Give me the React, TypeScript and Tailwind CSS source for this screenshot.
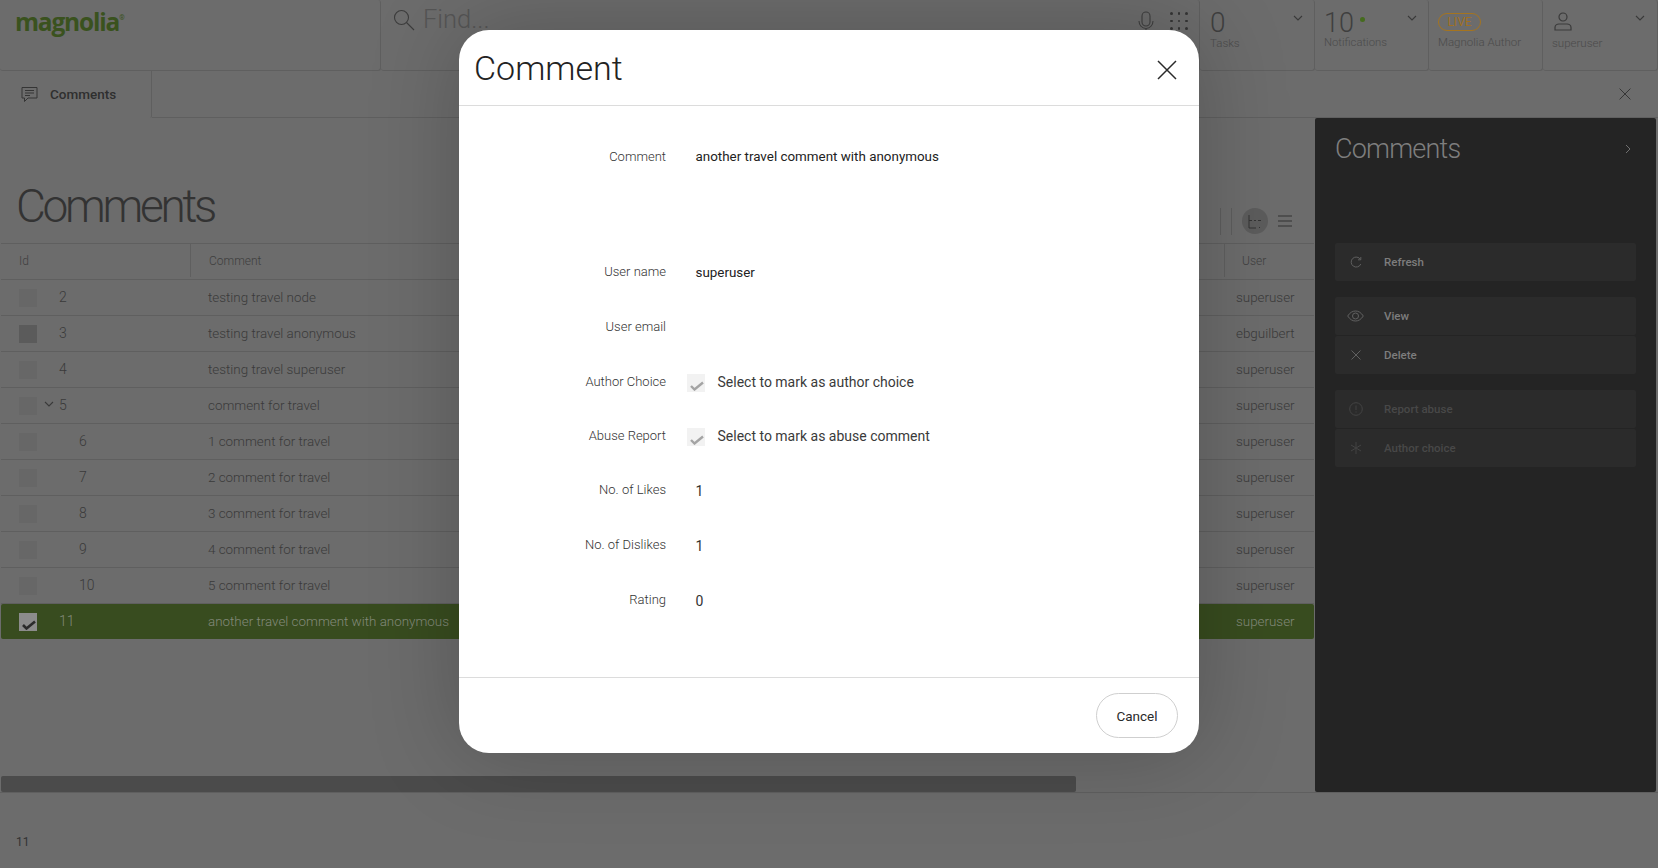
import React from "react";

const font = { fontFamily: "Roboto, sans-serif" };

const rows = [
  { id: "2", indent: false, text: "testing travel node", user: "superuser" },
  { id: "3", indent: false, text: "testing travel anonymous", user: "ebguilbert", dark: true },
  { id: "4", indent: false, text: "testing travel superuser", user: "superuser" },
  { id: "5", indent: false, text: "comment for travel", user: "superuser", open: true },
  { id: "6", indent: true, text: "1 comment for travel", user: "superuser" },
  { id: "7", indent: true, text: "2 comment for travel", user: "superuser" },
  { id: "8", indent: true, text: "3 comment for travel", user: "superuser" },
  { id: "9", indent: true, text: "4 comment for travel", user: "superuser" },
  { id: "10", indent: true, text: "5 comment for travel", user: "superuser" },
];

function Chevron({ className = "" }: { className?: string }) {
  return (
    <svg width="10" height="6" viewBox="0 0 10 6" className={className} fill="none" stroke="#3a3a3a" strokeWidth="1.1">
      <path d="M1 1l4 4 4-4" />
    </svg>
  );
}

function Cross({ size, color, width = 1 }: { size: number; color: string; width?: number }) {
  return (
    <svg width={size} height={size} viewBox="0 0 20 20" fill="none" stroke={color} strokeWidth={width}>
      <path d="M1 1l18 18M19 1L1 19" />
    </svg>
  );
}

function Check({ color, width = 2 }: { color: string; width?: number }) {
  return (
    <svg width="14" height="11" viewBox="0 0 14 11" fill="none" stroke={color} strokeWidth={width} className="absolute left-[3px] top-[6px]">
      <path d="M1 6l3.500 3.500L13 2.500" />
    </svg>
  );
}

function StatusCell({ className, children }: { className: string; children: React.ReactNode }) {
  return <div className={`relative h-[71px] rounded-[3px] border-b border-r border-[#5f5f5f] ${className}`}>{children}</div>;
}

function ActionButton({ icon, label, dim, className = "" }: { icon: React.ReactNode; label: string; dim?: boolean; className?: string }) {
  return (
    <div className={`flex h-[38px] items-center rounded-[2px] bg-[#2b2b2b] ${className}`}>
      <div className="flex w-[41px] justify-center">{icon}</div>
      <span className={`ml-[8px] pt-[2px] text-[11.500px] font-medium ${dim ? "text-[#484848]" : "text-[#7d7d7d]"}`}>{label}</span>
    </div>
  );
}

function FormRow({ label, flush, className = "", children }: { label: string; flush?: boolean; className?: string; children?: React.ReactNode }) {
  return (
    <div className={`flex items-center ${className}`}>
      <div className={`w-[207px] text-right text-[13px] font-light text-[#333] ${flush ? "mt-[1px]" : "mb-[1px]"}`}>{label}</div>
      <div className="flex items-center pl-[29.500px] text-[13.400px] text-[#222]">{children}</div>
    </div>
  );
}

function Value({ children, digit }: { children: React.ReactNode; digit?: boolean }) {
  return <span className={`pt-[2px] ${digit ? "text-[14px] text-[#333]" : ""}`}>{children}</span>;
}

function DisabledCheck({ label }: { label: string }) {
  return (
    <div className="flex items-center">
      <div className="relative mt-[2px] h-[18px] w-[18px] bg-[#f2f2f2]">
        <Check color="#a4a4a4" width={2.4} />
      </div>
      <span className="ml-[13px] text-[14px] text-[#3a3a3a]">{label}</span>
    </div>
  );
}

export default function App() {
  return (
    <div style={font} className="relative flex h-[868px] w-[1658px] flex-col overflow-hidden bg-[#6c6c6c] text-[#3a3a3a]">
      <header className="flex h-[71px] shrink-0">
        <StatusCell className="w-[381px]">
          <div className="ml-[15px] mt-[2px] flex items-start">
            <span style={{ fontFamily: '"Open Sans", sans-serif' }} className="text-[24.500px] font-bold leading-[40px] tracking-[-1.200px] text-[#3a521e]">
              magnolia
            </span>
            <span className="mt-[11px] text-[7px] leading-[10px] text-[#3a521e]">®</span>
          </div>
        </StatusCell>
        <StatusCell className="flex w-[819px] items-start">
          <svg width="22" height="22" viewBox="0 0 22 22" fill="none" stroke="#3c3c3c" strokeWidth="1.1" className="ml-[12px] mt-[9px]">
            <circle cx="8.500" cy="8.500" r="7" />
            <path d="M13.500 13.500l7.500 7.500" />
          </svg>
          <span className="ml-[8px] mt-[2px] text-[25.500px] font-light leading-[34px] text-[#555]">Find...</span>
          <svg width="16" height="24" viewBox="0 0 16 24" fill="none" stroke="#3f3f3f" strokeWidth="1.1" className="absolute left-[757px] top-[11px]">
            <rect x="4" y="1" width="8" height="14" rx="4" />
            <path d="M1 10c0 4 3 7.500 7 7.500s7-3.500 7-7.500M8 17.500V23" />
          </svg>
          <div className="absolute left-[789px] top-[12px] grid grid-cols-3 gap-[5px]">
            {Array.from({ length: 9 }).map((_, i) => (
              <div key={i} className="h-[2.500px] w-[2.500px] rounded-full bg-[#353535]" />
            ))}
          </div>
        </StatusCell>
        <StatusCell className="w-[115px] pl-[10px]">
          <div className="mt-[8px] text-[28px] font-light leading-[30px] text-[#3f3f3f]">0</div>
          <div className="mt-[-3px] text-[11.500px] font-light text-[#4b4b4b]">Tasks</div>
          <Chevron className="absolute left-[93px] top-[15px]" />
        </StatusCell>
        <StatusCell className="w-[114px] pl-[9px]">
          <div className="mt-[8px] flex items-start">
            <span className="text-[27px] font-light leading-[30px] text-[#3f3f3f]">10</span>
            <span className="ml-[6px] mt-[9px] h-[5px] w-[5px] rounded-full bg-[#456b1e]" />
          </div>
          <div className="mt-[-3px] text-[11.300px] font-light text-[#4b4b4b]">Notifications</div>
          <Chevron className="absolute left-[92px] top-[15px]" />
        </StatusCell>
        <StatusCell className="w-[114px] pl-[9px]">
          <div className="mt-[13px] flex h-[18px] w-[43px] items-center justify-center rounded-full border border-[#a5741f] text-[12px] text-[#a0701f]">LIVE</div>
          <div className="mt-[3px] text-[11.500px] font-light text-[#4b4b4b]">Magnolia Author</div>
        </StatusCell>
        <StatusCell className="w-[115px] pl-[9px]">
          <svg width="18" height="19" viewBox="0 0 18 19" fill="none" stroke="#3a3a3a" strokeWidth="1.2" className="absolute left-[11px] top-[12px]">
            <circle cx="9" cy="5" r="4" />
            <path d="M1 18v-2.500c0-2 2-3.500 4-3.500h8c2 0 4 1.500 4 3.500V18z" />
          </svg>
          <div className="mt-[35px] text-[11.500px] font-light text-[#4b4b4b]">superuser</div>
          <Chevron className="absolute left-[92px] top-[15px]" />
        </StatusCell>
      </header>

      <div className="flex h-[47px] shrink-0 items-stretch">
        <div className="flex w-[152px] items-center rounded-br-[2px] border-r border-[#5f5f5f] pl-[21px]">
          <svg width="17" height="17" viewBox="0 0 17 17" fill="none" stroke="#353535" strokeWidth="1">
            <path d="M1 1.500h15v10.500H7l-3.500 3.500V12H1zM4 4.500h9M4 7h9M4 9.500h5" />
          </svg>
          <span className="ml-[12px] text-[13.500px] font-medium text-[#2f2f2f]">Comments</span>
        </div>
        <div className="flex flex-1 items-center justify-end border-b border-[#5f5f5f] pr-[27px]">
          <Cross size={12} color="#333" width={1.6} />
        </div>
      </div>

      <main className="flex h-[674px] shrink-0">
        <section className="flex w-[1315px] flex-col pl-[1px] pr-[1px]">
          <div className="relative h-[125px] shrink-0">
            <h1 className="absolute left-[15px] top-[59px] text-[46px] font-light leading-[58px] tracking-[-3.300px] text-[#333]">Comments</h1>
            <div className="absolute left-[1219px] top-[90px] h-[27px] w-[12px] border-x border-[#5d5d5d]" />
            <div className="absolute left-[1241px] top-[90px] flex h-[26px] w-[26px] items-center justify-center rounded-full bg-[#5c5c5c]">
              <svg width="14" height="15" viewBox="0 0 14 15" fill="none" stroke="#333" strokeWidth="1">
                <path d="M1 1v13h7M1 6.500h3M6 6.500h2M10 6.500h3M11 13.500h1" />
              </svg>
            </div>
            <svg width="14" height="12" viewBox="0 0 14 12" fill="none" stroke="#333" strokeWidth="1.1" className="absolute left-[1277px] top-[97px]">
              <path d="M0 1h14M0 6h14M0 11h14" />
            </svg>
          </div>

          <div className="flex h-[37px] shrink-0 border-y border-[#5f5f5f] pb-[2px] text-[12px] font-light text-[#3f3f3f]">
            <div className="flex w-[190px] items-center border-r border-[#5f5f5f] pl-[18px]">Id</div>
            <div className="flex w-[1034px] items-center border-r border-[#5f5f5f] pl-[18px]">Comment</div>
            <div className="flex flex-1 items-center pl-[17px]">User</div>
          </div>

          {rows.map((row) => (
            <div key={row.id} className="flex h-[36px] shrink-0 items-center border-b border-[#5f5f5f] text-[13.400px] font-light text-[#3a3a3a]">
              <div className="relative flex w-[190px] items-center pl-[18px]">
                <div className={`h-[18px] w-[18px] ${row.dark ? "bg-[#5b5b5b]" : "bg-[#676767]"}`} />
                {row.open && <Chevron className="absolute left-[43px] top-[6px]" />}
                <span className={`text-[14px] ${row.indent ? "ml-[42px]" : "ml-[22px]"}`}>{row.id}</span>
              </div>
              <div className="w-[1034px] pl-[17px] pt-[1px]">{row.text}</div>
              <div className="pl-[11px] pt-[1px]">{row.user}</div>
            </div>
          ))}

          <div className="flex h-[35px] shrink-0 items-center rounded-[2px] bg-[#384c1f] text-[13.400px] font-light text-[#838a7a]">
            <div className="flex w-[190px] items-center pl-[18px]">
              <div className="relative h-[18px] w-[18px] bg-[#8c8c8c]">
                <Check color="#2b2b2b" width={2.6} />
              </div>
              <span className="ml-[22px] text-[14px]">11</span>
            </div>
            <div className="w-[1034px] pl-[17px] pt-[1px]">another travel comment with anonymous</div>
            <div className="pl-[11px] pt-[1px]">superuser</div>
          </div>

          <div className="flex-1" />
          <div className="h-[16px] w-[1075px] shrink-0 rounded-[2px] bg-[#4b4b4b]" />
        </section>

        <aside className="flex w-[341px] flex-col rounded-[2px] bg-[#242424] px-[20px]">
          <div className="flex h-[62px] items-center justify-between pr-[5px]">
            <span className="text-[27px] font-light leading-[40px] tracking-[-0.800px] text-[#7e7e7e]">Comments</span>
            <svg width="6" height="10" viewBox="0 0 6 10" fill="none" stroke="#707070" strokeWidth="1">
              <path d="M1 1l4 4-4 4" />
            </svg>
          </div>
          <ActionButton
            className="mt-[63px]"
            label="Refresh"
            icon={
              <svg width="12" height="12" viewBox="0 0 12 12" fill="none" stroke="#5f5f5f" strokeWidth="1">
                <path d="M10.500 3.500A5 5 0 1 0 10.800 8M10.800 1v2.800H8" />
              </svg>
            }
          />
          <ActionButton
            className="mt-[16px]"
            label="View"
            icon={
              <svg width="17" height="12" viewBox="0 0 17 12" fill="none" stroke="#616161" strokeWidth="1">
                <path d="M.7 6C3 2.500 5.500 1 8.500 1s5.500 1.500 7.800 5c-2.300 3.500-4.800 5-7.800 5S3 9.500.7 6z" />
                <circle cx="8.500" cy="6" r="3" />
              </svg>
            }
          />
          <ActionButton className="mt-px" label="Delete" icon={<Cross size={10} color="#666" width={1.8} />} />
          <ActionButton
            dim
            className="mt-[16px]"
            label="Report abuse"
            icon={
              <svg width="14" height="14" viewBox="0 0 14 14" fill="none" stroke="#434343" strokeWidth="1">
                <circle cx="7" cy="7" r="6.300" />
                <path d="M7 3.500v4.500M7 9.500v1" />
              </svg>
            }
          />
          <ActionButton
            dim
            className="mt-px"
            label="Author choice"
            icon={
              <svg width="12" height="12" viewBox="0 0 12 12" fill="none" stroke="#434343" strokeWidth="1">
                <path d="M6 0v12M1 3l10 6M11 3L1 9" />
              </svg>
            }
          />
        </aside>
      </main>

      <footer className="flex flex-1 items-end border-t border-[#5f5f5f] pb-[17px] pl-[16px] text-[12px] text-[#333]">11</footer>

      <div className="absolute left-[459px] top-[30px] flex h-[723px] w-[740px] flex-col rounded-[30px] bg-white shadow-[0_0_90px_rgba(0,0,0,0.22)]">
        <div className="flex h-[76px] shrink-0 items-center justify-between border-b border-[#dcdcdc] pl-[15px] pr-[22px]">
          <h2 className="text-[34px] font-light leading-[44px] text-[#222]">Comment</h2>
          <div className="mt-[4px]">
            <Cross size={20} color="#2a2a2a" width={1.5} />
          </div>
        </div>
        <div className="flex flex-1 flex-col pt-[40px]">
          <FormRow flush label="Comment" className="h-[20px]"><Value>another travel comment with anonymous</Value></FormRow>
          <FormRow label="User name" className="mt-[96px] h-[20px]"><Value>superuser</Value></FormRow>
          <FormRow label="User email" className="mt-[35px] h-[20px]" />
          <FormRow label="Author Choice" className="mt-[35px] h-[20px]">
            <div className="ml-[-9px]"><DisabledCheck label="Select to mark as author choice" /></div>
          </FormRow>
          <FormRow label="Abuse Report" className="mt-[34px] h-[20px]">
            <div className="ml-[-9px]"><DisabledCheck label="Select to mark as abuse comment" /></div>
          </FormRow>
          <FormRow label="No. of Likes" className="mt-[34px] h-[20px]"><Value digit>1</Value></FormRow>
          <FormRow label="No. of Dislikes" className="mt-[35px] h-[20px]"><Value digit>1</Value></FormRow>
          <FormRow label="Rating" className="mt-[35px] h-[20px]"><Value digit>0</Value></FormRow>
        </div>
        <div className="flex h-[76px] shrink-0 items-center justify-end border-t border-[#dcdcdc] pr-[21px]">
          <button className="h-[45px] w-[82px] rounded-full border border-[#cfcfcf] pt-[2px] text-[13.500px] text-[#2a2a2a]">Cancel</button>
        </div>
      </div>
    </div>
  );
}
